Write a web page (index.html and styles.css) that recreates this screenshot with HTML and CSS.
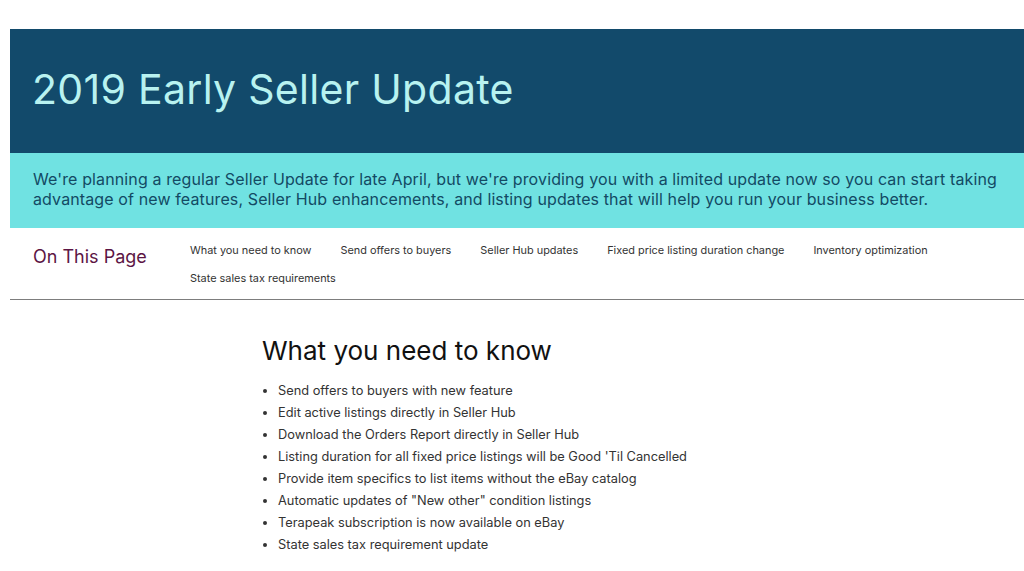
FILE: index.html
```html
<!DOCTYPE html>
<html lang="en">

<head>
    <meta charset="UTF-8">
    <meta name="viewport" content="width=device-width, initial-scale=1.0">
    <title>2019 Early Seller Update</title>

    <link rel="stylesheet" href="styles.css">
</head>

<body>
    <div id="page">
        <header class="hero">
            <h1>2019 Early Seller Update</h1>
        </header>

        <div class="intro">
            <p>We're planning a regular Seller Update for late April, but we're providing you with a limited update now so you can start taking advantage of new features, Seller Hub enhancements, and listing updates that will help you run your business better.</p>
        </div>

        <nav class="on-page">
            <h2>On This Page</h2>
            <ul class="page-links">
                <li><a href="#need-to-know">What you need to know</a></li>
                <li><a href="#">Send offers to buyers</a></li>
                <li><a href="#">Seller Hub updates</a></li>
                <li><a href="#">Fixed price listing duration change</a></li>
                <li><a href="#">Inventory optimization</a></li>
                <li><a href="#">State sales tax requirements</a></li>
            </ul>
        </nav>

        <section class="content" id="need-to-know">
            <h3>What you need to know</h3>
            <ul>
                <li>Send offers to buyers with new feature</li>
                <li>Edit active listings directly in Seller Hub</li>
                <li>Download the Orders Report directly in Seller Hub</li>
                <li>Listing duration for all fixed price listings will be Good 'Til Cancelled</li>
                <li>Provide item specifics to list items without the eBay catalog</li>
                <li>Automatic updates of "New other" condition listings</li>
                <li>Terapeak subscription is now available on eBay</li>
                <li>State sales tax requirement update</li>
            </ul>
        </section>
    </div>
</body>

</html>
```

FILE: styles.css
```css
body {
    margin: 0;
    font-family: Inter, "Open Sans", sans-serif;
    background: #fff;
}

#page {
    margin-left: 10px;
    padding-top: 29px;
}

.hero {
    background-color: #124a6b;
    height: 124px;
    display: flex;
    align-items: center;
    padding-left: 22px;
}

.hero h1 {
    margin: 0 0 4px 0;
    color: #b8f2f0;
    font-size: 41px;
    font-weight: 400;
    letter-spacing: 0.3px;
}

.intro {
    background-color: #70e2e2;
    padding: 16px 20px 16px 23px;
    height: 43px;
}

.intro p {
    margin: 0;
    color: #134a64;
    font-size: 16px;
    line-height: 20px;
    letter-spacing: 0.12px;
}

.on-page {
    display: flex;
    align-items: flex-start;
    border-bottom: 1px solid #7d7d7d;
    height: 71px;
}

.on-page h2 {
    margin: 18px 0 0 23px;
    width: 157px;
    color: #5c1544;
    font-size: 18px;
    font-weight: 400;
}

.page-links {
    list-style: none;
    margin: 8px 0 0 0;
    padding: 0;
    display: flex;
    flex-wrap: wrap;
    column-gap: 29px;
    max-width: 780px;
}

.page-links li {
    line-height: 28px;
    font-size: 10.9px;
}

.page-links a {
    color: #333;
    text-decoration: none;
}

.content {
    padding: 35px 0 0 252px;
}

.content h3 {
    margin: 0 0 14px 0;
    font-size: 26px;
    font-weight: 400;
    color: #111;
}

.content ul {
    margin: 0;
    padding-left: 16px;
}

.content li {
    font-size: 12.8px;
    line-height: 22px;
    color: #333;
}
```
